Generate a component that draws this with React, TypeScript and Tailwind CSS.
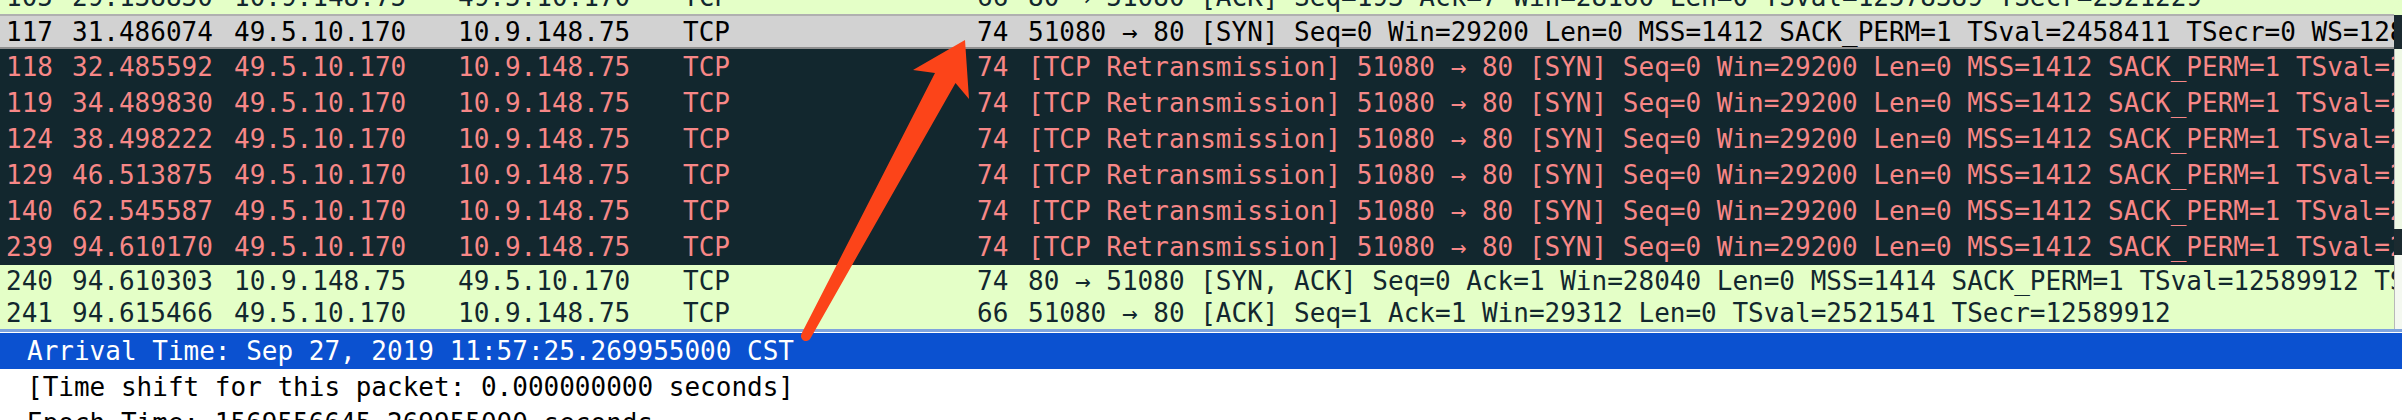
import React from "react";

type Kind = "ok" | "bad" | "sel";

type Packet = {
  no: string;
  time: string;
  src: string;
  dst: string;
  proto: string;
  len: string;
  info: string;
  kind: Kind;
};

const retrans = (ts: string) =>
  `[TCP Retransmission] 51080 → 80 [SYN] Seq=0 Win=29200 Len=0 MSS=1412 SACK_PERM=1 TSval=${ts} TSecr=0 WS=128`;

const packets: Packet[] = [
  { no: "117", time: "31.486074", src: "49.5.10.170", dst: "10.9.148.75", proto: "TCP", len: "74", info: "51080 → 80 [SYN] Seq=0 Win=29200 Len=0 MSS=1412 SACK_PERM=1 TSval=2458411 TSecr=0 WS=128", kind: "sel" },
  { no: "118", time: "32.485592", src: "49.5.10.170", dst: "10.9.148.75", proto: "TCP", len: "74", info: retrans("2459412"), kind: "bad" },
  { no: "119", time: "34.489830", src: "49.5.10.170", dst: "10.9.148.75", proto: "TCP", len: "74", info: retrans("2461416"), kind: "bad" },
  { no: "124", time: "38.498222", src: "49.5.10.170", dst: "10.9.148.75", proto: "TCP", len: "74", info: retrans("2465424"), kind: "bad" },
  { no: "129", time: "46.513875", src: "49.5.10.170", dst: "10.9.148.75", proto: "TCP", len: "74", info: retrans("2473440"), kind: "bad" },
  { no: "140", time: "62.545587", src: "49.5.10.170", dst: "10.9.148.75", proto: "TCP", len: "74", info: retrans("2489472"), kind: "bad" },
  { no: "239", time: "94.610170", src: "49.5.10.170", dst: "10.9.148.75", proto: "TCP", len: "74", info: retrans("2521536"), kind: "bad" },
  { no: "240", time: "94.610303", src: "10.9.148.75", dst: "49.5.10.170", proto: "TCP", len: "74", info: "80 → 51080 [SYN, ACK] Seq=0 Ack=1 Win=28040 Len=0 MSS=1414 SACK_PERM=1 TSval=12589912 TSecr=2521536 WS=128", kind: "ok" },
  { no: "241", time: "94.615466", src: "49.5.10.170", dst: "10.9.148.75", proto: "TCP", len: "66", info: "51080 → 80 [ACK] Seq=1 Ack=1 Win=29312 Len=0 TSval=2521541 TSecr=12589912", kind: "ok" },
];

const rowStyle: Record<Kind, string> = {
  ok: "h-[32px] bg-[#e4ffc7] text-[#12272e]",
  bad: "h-[36px] bg-[#12272e] text-[#f78787]",
  sel: "h-[35px] bg-[#d2d2d2] text-black border-t-2 border-b-2 border-t-[#b0b0b0] border-b-[#8f8f8f]",
};

function Row({ p, className }: { p: Packet; className: string }) {
  return (
    <div
      className={`grid grid-cols-[66px_162px_224px_225px_294px_51px_minmax(0,1fr)] items-center pl-[6px] whitespace-pre leading-[30px] ${className}`}
    >
      <span>{p.no}</span>
      <span>{p.time}</span>
      <span>{p.src}</span>
      <span>{p.dst}</span>
      <span>{p.proto}</span>
      <span>{p.len}</span>
      <span className="overflow-hidden">{p.info}</span>
    </div>
  );
}

const partial: Packet = {
  no: "105",
  time: "29.138830",
  src: "10.9.148.75",
  dst: "49.5.10.170",
  proto: "TCP",
  len: "66",
  info: "80 → 51080 [ACK] Seq=193 Ack=7 Win=28160 Len=0 TSval=12578389 TSecr=2521229",
  kind: "ok",
};

export default function App() {
  return (
    <div className="relative w-[2402px] h-[420px] overflow-hidden bg-white font-['DejaVu_Sans_Mono','Liberation_Mono',monospace] text-[26px]">
      {/* packet list */}
      <div className="flex">
        <div className="flex-1 min-w-0 overflow-hidden">
          <div className="h-[14px] overflow-hidden flex flex-col justify-end">
            <Row p={partial} className="h-[35px] shrink-0 bg-[#e4ffc7] text-[#12272e]" />
          </div>
          {packets.map((p) => (
            <Row key={p.no} p={p} className={rowStyle[p.kind]} />
          ))}
        </div>
        {/* scrollbar packet map */}
        <div className="w-[8px] flex flex-col">
          <div className="h-[15px] bg-[#e4ffc7]" />
          <div className="h-[34px] bg-[#1b2a30]" />
          <div className="h-[180px] bg-[#eef8e4] border-l border-[#b8b8b8]" />
          <div className="h-[26px] bg-[#1b2a30]" />
          <div className="flex-1 bg-[#f4f8f0] border-l border-[#b8b8b8]" />
        </div>
      </div>

      <div className="h-[3px] bg-[#7fa3dd]" />
      <div className="h-px bg-white" />

      {/* packet details */}
      <div className="h-[36px] flex items-center pl-[27px] bg-[#0b51d0] text-white whitespace-pre leading-[30px]">
        Arrival Time: Sep 27, 2019 11:57:25.269955000 CST
      </div>
      <div className="h-[36px] flex items-center pl-[27px] text-black whitespace-pre leading-[30px]">
        [Time shift for this packet: 0.000000000 seconds]
      </div>
      <div className="h-[36px] flex items-center pl-[27px] text-black whitespace-pre leading-[30px]">
        Epoch Time: 1569556645.269955000 seconds
      </div>

      {/* annotation arrow */}
      <svg
        className="absolute inset-0 pointer-events-none"
        width="2402"
        height="420"
        viewBox="0 0 2402 420"
      >
        <path
          d="M965 40 L969 99 L955.5 83 L810.4 338.4 A5 5 0 0 1 801.6 333.6 L935 73 L913 70 Z"
          fill="#fc4419"
        />
      </svg>
    </div>
  );
}
